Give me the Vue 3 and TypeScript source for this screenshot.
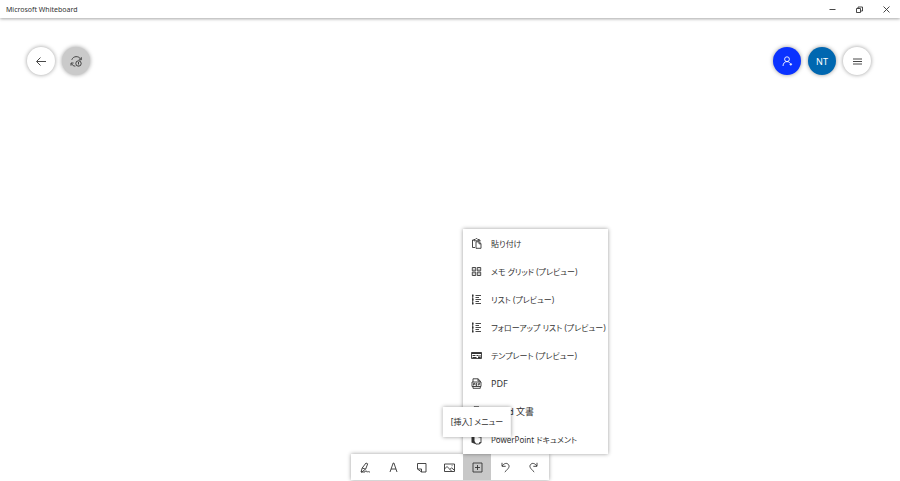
<script setup lang="ts">
interface Shape {
  d: string
  fill?: boolean
}
interface Item {
  label: string
  icon: string
}

const icons: Record<string, Shape[]> = {
  minimize: [{ d: 'M3.5 6.5h6' }],
  restore: [{ d: 'M3.5 5.5h4v4h-4zM5 5.5V4h4.5v4H8' }],
  close: [{ d: 'M3.5 3.5l6 6M9.5 3.5l-6 6' }],
  back: [{ d: 'M11 6.5H2M5.5 2.5l-4 4 4 4' }],
  sync: [
    { d: 'M1.8 4.8C3 .8 9 .6 10.6 4.2M11.3 2.2v2.6H8.8M1 10.6V8h2.6M1.6 8.6c.8 1.8 2 2.5 3.8 2.5' },
    { d: 'M8.5 5.8a2.7 2.7 0 1 0 0 5.4a2.7 2.7 0 1 0 0-5.4M8.5 7v2M8.5 9.5v.8' },
  ],
  invite: [
    { d: 'M6 1.8a2.4 2.4 0 1 0 0 4.8a2.4 2.4 0 1 0 0-4.8M2 11c.2-2.8 1.7-4.4 4-4.4 1.2 0 2.1.4 2.8 1.2' },
    { d: 'M9.8 8v2.6M8.5 9.3h2.6' },
  ],
  burger: [{ d: 'M2 4h9M2 6.5h9M2 9h9' }],
  paste: [{ d: 'M5 10.5H2.5V3H4M9 3h1v1.5M4 3.8V2.5h1.2L6.5 1.2l1.3 1.3H9v1.3zM6 4.8h3.2l1.8 1.7v4.8H6zM9 4.8v2h2' }],
  grid: [{ d: 'M2.3 2.5h3.4v3.3H2.3zM7.3 2.5h3.4v3.3H7.3zM2.3 7.2h3.4v3.3H2.3zM7.3 7.2h3.4v3.3H7.3zM3.5 4.2h1M8.5 4.2h1M3.5 8.9h1M8.5 8.9h1' }],
  list: [
    { d: 'M2 1.5h1.5v2H2zM2 5.5h1.5v2H2zM2 9.5h1.5v2H2z', fill: true },
    { d: 'M2.7 2v9M5.5 2.5H11M5.5 4.5H9M5.5 6.5H11M5.5 8.5H9M5.5 10.5H11' },
  ],
  template: [
    { d: 'M1.5 3.5h10v6h-10z' },
    { d: 'M1.5 3.5h10v1.5h-10zM2.5 6h3v1h-3zM6.5 6h2v1h-2zM9.5 6h1v1h-1zM2.5 8h4v1h-4zM8 7.6h2.8v1.6H8z', fill: true },
  ],
  pdf: [{ d: 'M3 5V1.8h5L10.3 4v1M8 1.8V4h2.3M2 5h9v4.5H2zM3 9.5v1.8h7.3V9.5M3.6 8.5V6.3h1v1h-1M6 6.3v2.2h.8V6.3zM8.7 8.5V6.3h1.3M8.7 7.4h1' }],
  document: [
    { d: 'M4 4V1.8h4.5L11 4v7H5M8.5 1.8V4H11' },
    { d: 'M2 4.5h5v5H2z', fill: true },
  ],
  slides: [
    { d: 'M5 1.5h3.5L11 4v5.5L9.5 11H6M8.5 1.5V4H11M9.5 11V9.5H11' },
    { d: 'M1.5 3l3-1v6l2 3.5-5-2z', fill: true },
  ],
  pen: [{ d: 'M2 11l1.2-4L7 2l1.7.8-2 5.2L3 10.8zM3.2 7l3.4 1.2M2 11h4c.4-1.3 1.4-1.6 1.5-.8 0 .8.5 1 1.2.5.8-.5.8.4 2.3.3' }],
  text: [{ d: 'M3 11l3.2-9h.7L10 11M4 8h5' }],
  note: [{ d: 'M2.5 2.5h8.5V11H6.5L2.5 8zM6.5 11V8h-4' }],
  image: [{ d: 'M1.5 3h10v7.5h-10zM1.5 8L4 5.5l5 5M7 8.3l1.5-1.5 3 2.5M8.7 4.7h.8' }],
  insert: [{ d: 'M2 2h9v9H2zM6.5 4v5M4 6.5h5' }],
  undo: [{ d: 'M3 1.8v3.5h3.7M3.2 5C5 2.2 7.8 1.7 9.2 3.3c2 2.2.5 4-3.4 7.7' }],
  redo: [{ d: 'M10 1.8v3.5H6.3M9.8 5C8 2.2 5.2 1.7 3.8 3.3c-2 2.2-.5 4 3.4 7.7' }],
}

const windowButtons: Item[] = [
  { label: '最小化', icon: 'minimize' },
  { label: '元に戻す (縮小)', icon: 'restore' },
  { label: '閉じる', icon: 'close' },
]

const menuItems: Item[] = [
  { label: '貼り付け', icon: 'paste' },
  { label: 'メモ グリッド (プレビュー)', icon: 'grid' },
  { label: 'リスト (プレビュー)', icon: 'list' },
  { label: 'フォローアップ リスト (プレビュー)', icon: 'list' },
  { label: 'テンプレート (プレビュー)', icon: 'template' },
  { label: 'PDF', icon: 'pdf' },
  { label: 'Word 文書', icon: 'document' },
  { label: 'PowerPoint ドキュメント', icon: 'slides' },
]

const tools: Item[] = [
  { label: 'インク', icon: 'pen' },
  { label: 'テキスト', icon: 'text' },
  { label: 'メモ', icon: 'note' },
  { label: '画像', icon: 'image' },
  { label: '[挿入] メニュー', icon: 'insert' },
  { label: '元に戻す', icon: 'undo' },
  { label: 'やり直し', icon: 'redo' },
]

// Labels that contain kana are set one step smaller than the others.
const hasKana = (label: string): boolean => /[\u3040-\u30ff]/.test(label)
</script>

<template>
  <div class="app">
    <header class="titlebar">
      <h1 class="title">Microsoft Whiteboard</h1>
      <div class="window-buttons">
        <button v-for="b in windowButtons" :key="b.icon" type="button" :aria-label="b.label">
          <svg class="icon" viewBox="0 0 13 13" aria-hidden="true">
            <path v-for="(s, i) in icons[b.icon]" :key="i" :d="s.d" />
          </svg>
        </button>
      </div>
    </header>

    <main class="board">
      <nav class="actions">
        <div class="group">
          <button type="button" class="round" aria-label="戻る">
            <svg class="icon" viewBox="0 0 13 13" aria-hidden="true">
              <path v-for="(s, i) in icons.back" :key="i" :d="s.d" />
            </svg>
          </button>
          <button type="button" class="round status" aria-label="同期の状態">
            <svg class="icon" viewBox="0 0 13 13" aria-hidden="true">
              <path v-for="(s, i) in icons.sync" :key="i" :d="s.d" />
            </svg>
          </button>
        </div>
        <div class="group">
          <button type="button" class="round invite" aria-label="招待">
            <svg class="icon" viewBox="0 0 13 13" aria-hidden="true">
              <path v-for="(s, i) in icons.invite" :key="i" :d="s.d" />
            </svg>
          </button>
          <button type="button" class="round account">NT</button>
          <button type="button" class="round" aria-label="設定">
            <svg class="icon" viewBox="0 0 13 13" aria-hidden="true">
              <path v-for="(s, i) in icons.burger" :key="i" :d="s.d" />
            </svg>
          </button>
        </div>
      </nav>

      <div class="toolbar" role="toolbar">
        <div v-for="t in tools" :key="t.icon" class="tool">
          <button type="button" :class="{ active: t.icon === 'insert' }" :aria-label="t.label">
            <svg class="icon" viewBox="0 0 13 13" aria-hidden="true">
              <path v-for="(s, i) in icons[t.icon]" :key="i" :d="s.d" />
            </svg>
          </button>
          <template v-if="t.icon === 'insert'">
            <ul class="menu">
              <li v-for="m in menuItems" :key="m.label">
                <button type="button" class="menu-item">
                  <svg class="icon" viewBox="0 0 13 13" aria-hidden="true">
                    <path v-for="(s, i) in icons[m.icon]" :key="i" :d="s.d" :class="{ solid: s.fill }" />
                  </svg>
                  <span :class="{ kana: hasKana(m.label) }">{{ m.label }}</span>
                </button>
              </li>
            </ul>
            <div class="tooltip kana" role="tooltip">{{ t.label }}</div>
          </template>
        </div>
      </div>
    </main>
  </div>
</template>

<style>
body {
  background: #fff;
}
</style>

<style scoped>
.app {
  display: flex;
  flex-direction: column;
  min-height: 100vh;
  overflow: hidden;
  color: #333;
  font-family: "Noto Sans", "Noto Sans CJK JP", sans-serif;
  font-size: 9px;
  font-kerning: normal;
  font-feature-settings: "palt", "kern";
}
button {
  display: flex;
  align-items: center;
  justify-content: center;
  padding: 0;
  border: 0;
  background: none;
  color: inherit;
  font: inherit;
  font-kerning: inherit;
  font-feature-settings: inherit;
}
.icon {
  flex: none;
  width: 13px;
  height: 13px;
  fill: none;
  stroke: currentColor;
  stroke-width: 0.9;
}
.solid {
  fill: currentColor;
  stroke: none;
}
.kana {
  font-size: 8px;
}
.titlebar {
  display: flex;
  align-items: center;
  justify-content: space-between;
  height: 18px;
  padding-left: 6px;
  box-shadow: 0 1px 3px rgba(0, 0, 0, 0.35);
}
.title {
  margin: 0;
  font-size: 7px;
  font-weight: 400;
}
.window-buttons {
  display: flex;
}
.window-buttons button {
  width: 27px;
  height: 18px;
}
.board {
  display: flex;
  flex: 1;
  flex-direction: column;
  align-items: center;
  justify-content: space-between;
  padding-bottom: 1px;
}
.actions {
  display: flex;
  align-self: stretch;
  justify-content: space-between;
  padding: 29px 29px 0 27px;
}
.group {
  display: flex;
  gap: 7px;
}
.round {
  width: 28px;
  height: 28px;
  border-radius: 50%;
  background: #fff;
  box-shadow: 0 0 4px rgba(0, 0, 0, 0.4);
}
.status {
  background: #cacaca;
}
.invite {
  background: #0a32ff;
  color: #fff;
}
.account {
  background: #0067b0;
  color: #fff;
}
.toolbar {
  display: flex;
  padding-right: 2px;
  background: #fff;
  box-shadow: 0 0 4px rgba(0, 0, 0, 0.4);
}
.tool {
  position: relative;
}
.tool > button {
  width: 28px;
  height: 26px;
}
.tool > .active {
  background: #c8c8c8;
}
.menu {
  position: absolute;
  bottom: 100%;
  left: 0;
  margin: 0;
  padding: 0 0 1px;
  list-style: none;
  background: #fff;
  box-shadow: 0 0 4px rgba(0, 0, 0, 0.4);
}
.menu-item {
  justify-content: flex-start;
  gap: 8px;
  width: 100%;
  height: 28px;
  padding: 0 2px 0 7px;
  white-space: nowrap;
}
.tooltip {
  position: absolute;
  bottom: 43px;
  left: 50%;
  padding: 0 8px;
  line-height: 30px;
  white-space: nowrap;
  background: #fff;
  box-shadow: 0 0 4px rgba(0, 0, 0, 0.4);
  transform: translateX(-50%);
}
</style>
